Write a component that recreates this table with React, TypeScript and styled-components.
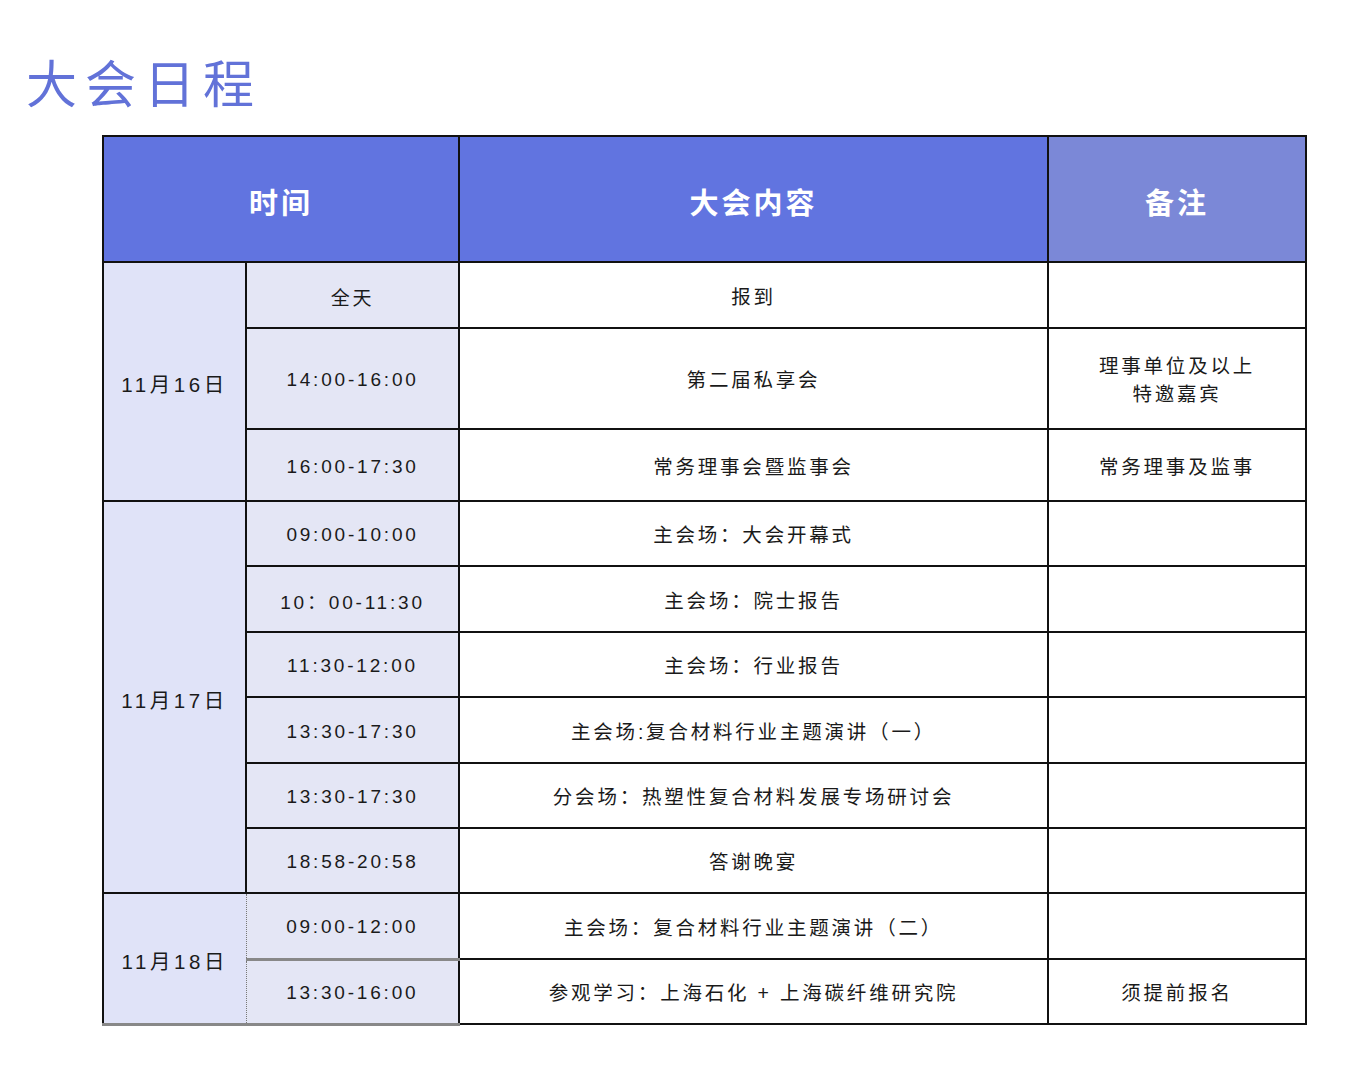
import React from "react";
import styled, { createGlobalStyle } from "styled-components";

const Global = createGlobalStyle`
  html, body { margin: 0; padding: 0; background: #ffffff; }
  body { font-family: "Liberation Sans", "Noto Sans CJK SC", sans-serif; color: #1a1a1a; }
`;

const Page = styled.div`
  width: 1370px;
  padding-top: 46px;
`;

const Title = styled.h1`
  margin: 0 0 19px 26px;
  font-family: "Noto Sans CJK SC", sans-serif;
  font-weight: 400;
  font-size: 51px;
  line-height: 70px;
  letter-spacing: 8px;
  color: #6272d8;
`;

const Table = styled.table`
  margin-left: 102px;
  width: 1203px;
  table-layout: fixed;
  border-collapse: collapse;
  border: 2px solid #111;
`;

const HeadCell = styled.th<{ $note?: boolean }>`
  height: 121px;
  padding: 3px 0 0;
  border: 2px solid #111;
  background: ${(p) => (p.$note ? "#7b88d7" : "#6174e0")};
  color: #ffffff;
  font-family: "Noto Sans CJK SC", sans-serif;
  font-weight: 700;
  font-size: 29px;
  letter-spacing: 3px;
  text-align: center;
  vertical-align: middle;
`;

const Row = styled.tr<{ $h: number }>`
  height: ${(p) => p.$h}px;
`;

const DateCell = styled.td<{ $last?: boolean }>`
  padding: 3px 0 0;
  border: 2px solid #111;
  background: #e0e3f8;
  font-size: 20.5px;
  letter-spacing: 3.6px;
  text-align: center;
  vertical-align: middle;
  ${(p) =>
    p.$last &&
    `border-bottom: 3px solid #888; border-right: 1px dotted #777;`}
`;

const TimeCell = styled.td<{ $grayBottom?: boolean; $dotLeft?: boolean }>`
  padding: 3px 0 0;
  border: 2px solid #111;
  background: #e4e6f5;
  font-size: 19px;
  letter-spacing: 2.8px;
  text-align: center;
  vertical-align: middle;
  ${(p) => p.$grayBottom && `border-bottom: 3px solid #888;`}
  ${(p) => p.$dotLeft && `border-left: 1px dotted #777;`}
`;

const TextCell = styled.td`
  padding: 3px 0 0;
  border: 2px solid #111;
  background: #ffffff;
  font-size: 19.5px;
  line-height: 28px;
  letter-spacing: 2.8px;
  text-align: center;
  vertical-align: middle;
`;

type Item = {
  time: string;
  content: string;
  note?: React.ReactNode;
  h: number;
};

type Group = { date: string; items: Item[] };

const groups: Group[] = [
  {
    date: "11月16日",
    items: [
      { time: "全天", content: "报到", h: 66 },
      {
        time: "14:00-16:00",
        content: "第二届私享会",
        note: (
          <>
            理事单位及以上
            <br />
            特邀嘉宾
          </>
        ),
        h: 101,
      },
      { time: "16:00-17:30", content: "常务理事会暨监事会", note: "常务理事及监事", h: 72 },
    ],
  },
  {
    date: "11月17日",
    items: [
      { time: "09:00-10:00", content: "主会场：大会开幕式", h: 65 },
      { time: "10：00-11:30", content: "主会场：院士报告", h: 66 },
      { time: "11:30-12:00", content: "主会场：行业报告", h: 65 },
      { time: "13:30-17:30", content: "主会场:复合材料行业主题演讲（一）", h: 66 },
      { time: "13:30-17:30", content: "分会场：热塑性复合材料发展专场研讨会", h: 65 },
      { time: "18:58-20:58", content: "答谢晚宴", h: 65 },
    ],
  },
  {
    date: "11月18日",
    items: [
      { time: "09:00-12:00", content: "主会场：复合材料行业主题演讲（二）", h: 66 },
      { time: "13:30-16:00", content: "参观学习：上海石化 + 上海碳纤维研究院", note: "须提前报名", h: 65 },
    ],
  },
];

export default function App() {
  return (
    <Page>
      <Global />
      <Title>大会日程</Title>
      <Table>
        <colgroup>
          <col style={{ width: 143 }} />
          <col style={{ width: 213 }} />
          <col style={{ width: 589 }} />
          <col style={{ width: 258 }} />
        </colgroup>
        <thead>
          <tr>
            <HeadCell colSpan={2}>时间</HeadCell>
            <HeadCell>大会内容</HeadCell>
            <HeadCell $note>备注</HeadCell>
          </tr>
        </thead>
        <tbody>
          {groups.map((g, gi) => {
            const last = gi === groups.length - 1;
            return g.items.map((it, i) => (
              <Row key={`${gi}-${i}`} $h={it.h}>
                {i === 0 && (
                  <DateCell rowSpan={g.items.length} $last={last}>
                    {g.date}
                  </DateCell>
                )}
                <TimeCell $grayBottom={last} $dotLeft={last}>
                  {it.time}
                </TimeCell>
                <TextCell>{it.content}</TextCell>
                <TextCell>{it.note ?? ""}</TextCell>
              </Row>
            ));
          })}
        </tbody>
      </Table>
    </Page>
  );
}
